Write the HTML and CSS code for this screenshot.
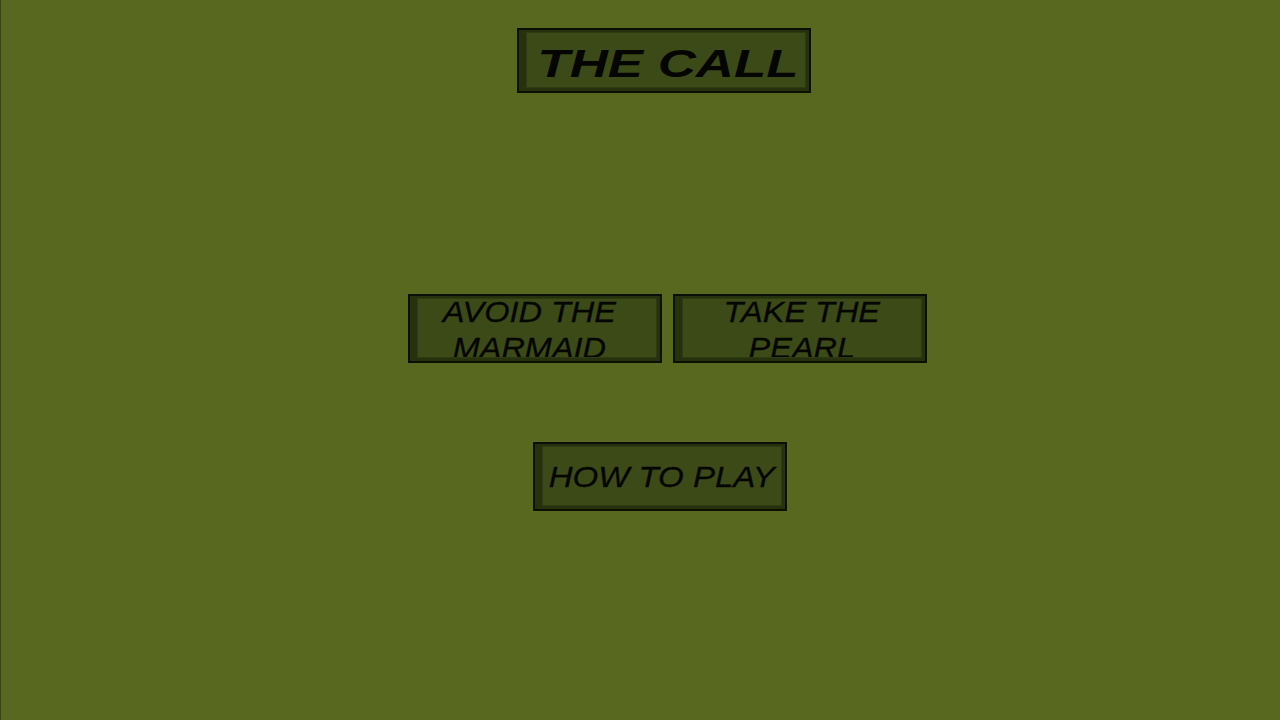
FILE: index.html
```html
<!DOCTYPE html>
<html>
<head>
<meta charset="utf-8">
<link rel="stylesheet" href="styles.css">
</head>
<body>
<div class="page">
  <div class="frame title-box">
    <div class="inner"><span class="txt title-txt">THE CALL</span></div>
  </div>
  <div class="choices">
    <div class="frame btn">
      <div class="inner"><span class="txt btn-txt shift">AVOID THE<br>MARMAID</span></div>
    </div>
    <div class="frame btn">
      <div class="inner"><span class="txt btn-txt">TAKE THE<br>PEARL</span></div>
    </div>
  </div>
  <div class="frame btn howto">
    <div class="inner"><span class="txt how-txt">HOW TO PLAY</span></div>
  </div>
</div>
</body>
</html>
```
FILE: styles.css
```css
html, body {
  margin: 0;
  padding: 0;
  height: 100%;
}
body {
  background: #59681f;
  font-family: "Liberation Sans", Arial, sans-serif;
}
.page {
  box-sizing: border-box;
  height: 720px;
  border-left: 1px solid #3a4514;
  display: flex;
  flex-direction: column;
  align-items: center;
  padding-left: 46px;
  padding-top: 28px;
}
.frame {
  box-sizing: border-box;
  border: 2px solid #0c1004;
  background: #26310d;
  padding: 2px 3px 3px 7px;
  display: flex;
}
.inner {
  flex: 1;
  background: #3c4a17;
  border: 1px solid #2e3a10;
  display: flex;
  align-items: center;
  justify-content: center;
  overflow: hidden;
  color: #050602;
  text-align: center;
}
.txt {
  display: inline-block;
  font-style: italic;
  white-space: nowrap;
}
.title-box {
  width: 294px;
  height: 65px;
}
.title-txt {
  font-weight: bold;
  font-size: 38px;
  line-height: 40px;
  transform: translate(2px, 4px) scaleX(1.39);
}
.choices {
  display: flex;
  gap: 11px;
  margin-top: 201px;
  margin-left: 7px;
}
.btn {
  width: 254px;
  height: 69px;
}
.btn-txt {
  font-size: 29px;
  line-height: 36px;
  -webkit-text-stroke: 0.3px #050602;
  transform: translate(0, 2px) scaleX(1.12);
}
.btn-txt.shift {
  transform: translate(-7px, 2px) scaleX(1.12);
}
.howto {
  margin-top: 79px;
  margin-right: 8px;
}
.how-txt {
  font-size: 30px;
  line-height: 34px;
  -webkit-text-stroke: 0.3px #050602;
  transform: translate(0, 1px) scaleX(1.1);
}
```
